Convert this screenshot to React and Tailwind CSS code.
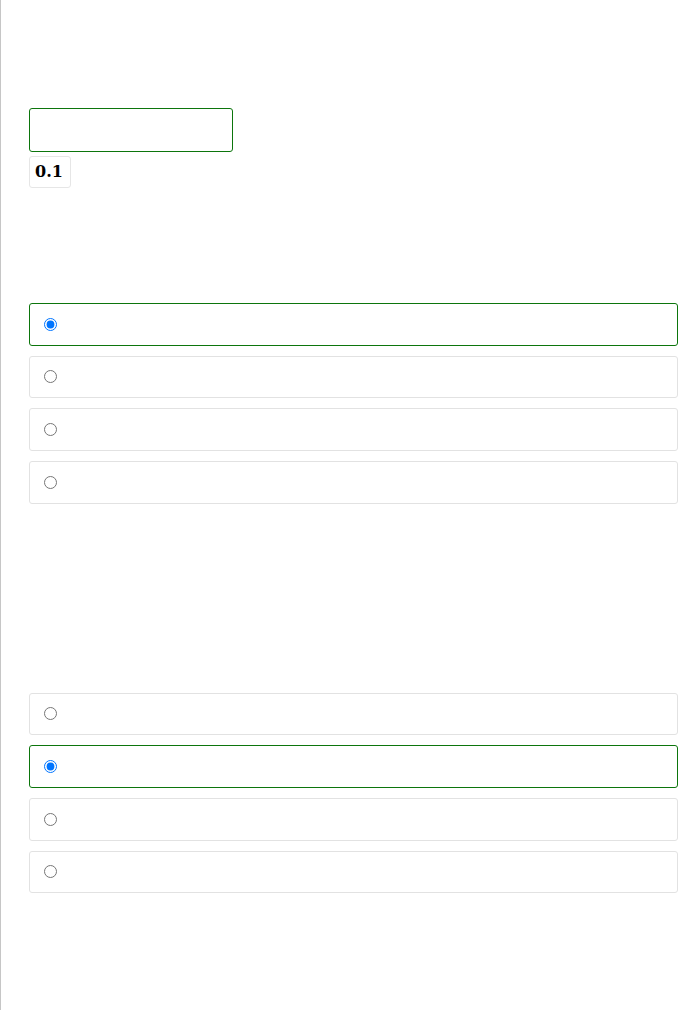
import React from "react";

function Row({ checked }) {
  return (
    <div
      className={
        checked
          ? "flex items-center h-[42.67px] rounded-[3px] border border-solid border-[#0c750c] pl-[14px] bg-white"
          : "flex items-center h-[42.67px] rounded-[3px] border border-solid border-[#e2e2e2] pl-[14px] bg-white"
      }
    >
      <input
        type="radio"
        defaultChecked={checked}
        tabIndex={-1}
        className="m-0 w-[13px] h-[13px]"
      />
    </div>
  );
}

export default function App() {
  return (
    <div className="min-h-[1010px] w-[678px] bg-white border-l border-[#c6c6c6] pl-[28px] pt-[108px]" style={{ fontFamily: '"DejaVu Serif", serif' }}>
      <div className="w-[204px] h-[44px] border border-[#0c750c] rounded-[3px]" />
      <div className="mt-[4px] w-[42px] h-[32px] border border-[#e6e6e6] rounded-[3px] flex items-center pl-[5px] text-[16px] font-bold text-black">
        0.1
      </div>
      <div className="mt-[115px] flex flex-col gap-[10px]">
        <Row checked />
        <Row />
        <Row />
        <Row />
      </div>
      <div className="mt-[189px] flex flex-col gap-[10px]">
        <Row />
        <Row checked />
        <Row />
        <Row />
      </div>
    </div>
  );
}
